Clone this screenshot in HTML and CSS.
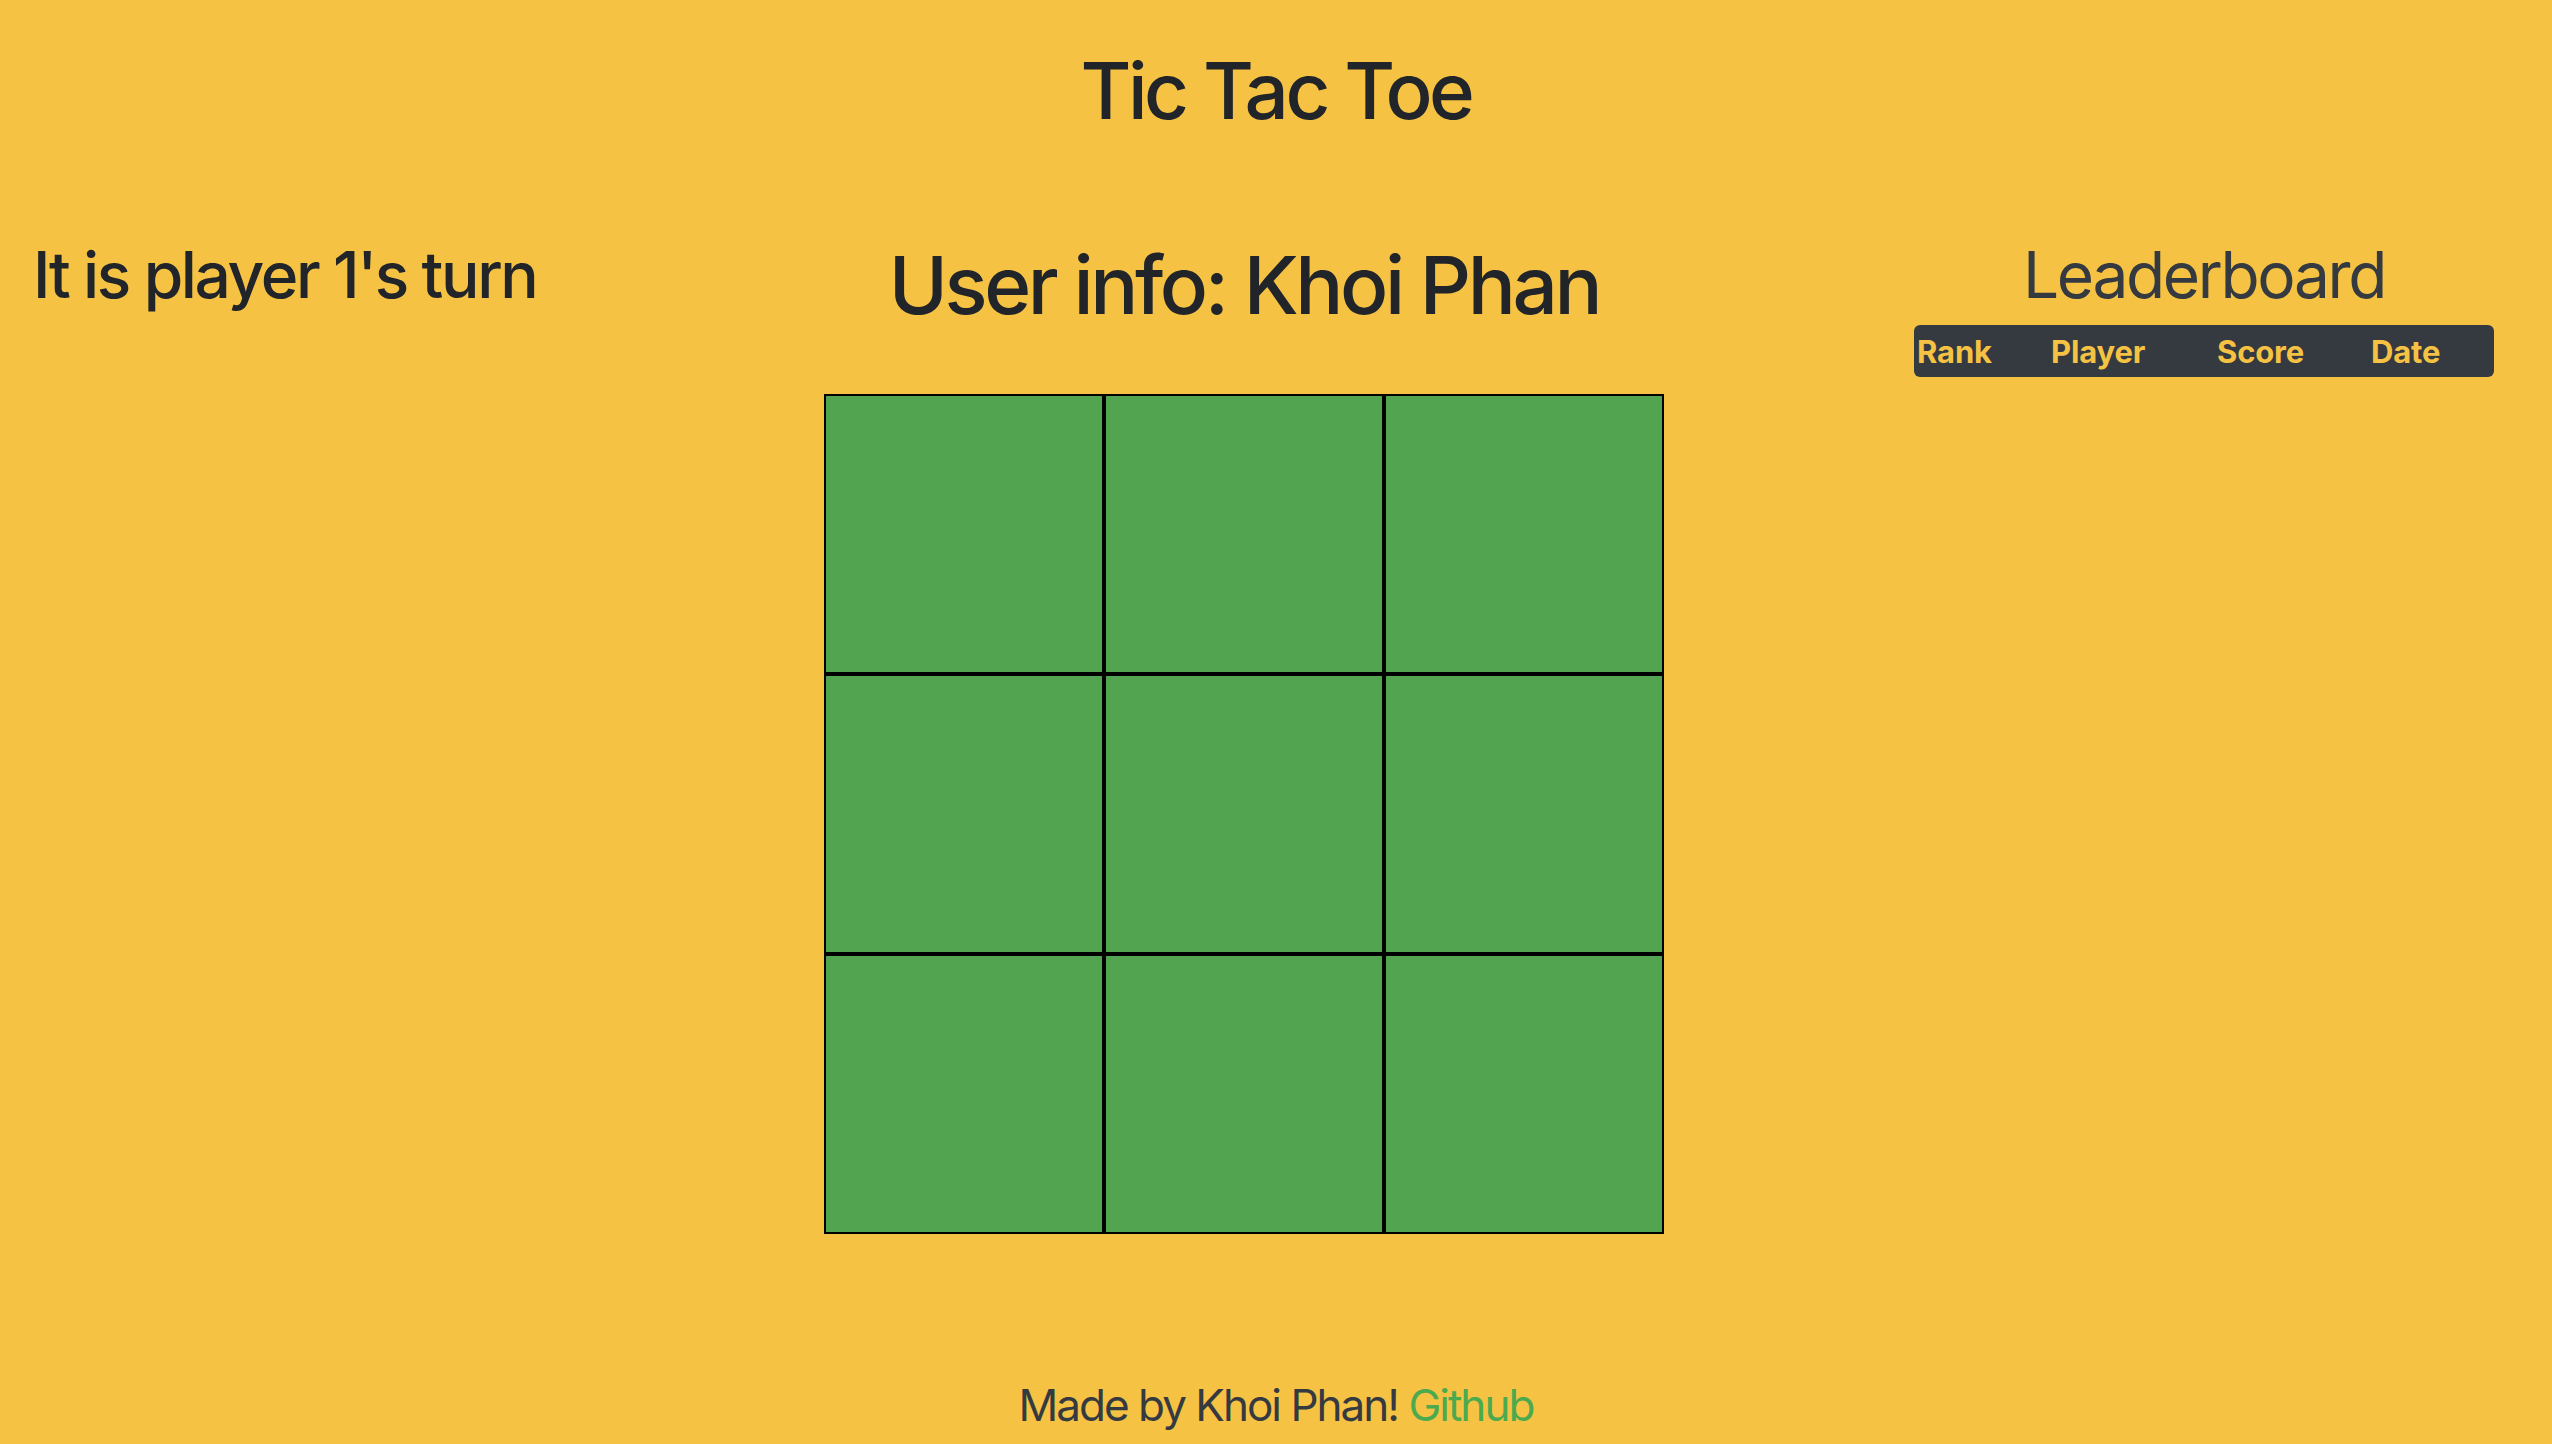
FILE: index.html
```html
<!DOCTYPE html>
<html lang="en">
<head>
<meta charset="utf-8">
<title>Tic Tac Toe</title>
<link rel="stylesheet" href="styles.css">
</head>
<body>
<div class="page">
  <h1 class="title">Tic Tac Toe</h1>
  <main class="layout">
    <section class="turn-col">
      <h3 class="turn">It is player 1's turn</h3>
    </section>
    <section class="game-col">
      <h2 class="user-info">User info: Khoi Phan</h2>
      <div class="board">
        <div class="cell"></div><div class="cell"></div><div class="cell"></div>
        <div class="cell"></div><div class="cell"></div><div class="cell"></div>
        <div class="cell"></div><div class="cell"></div><div class="cell"></div>
      </div>
    </section>
    <section class="leader-col">
      <h3 class="leader-title">Leaderboard</h3>
      <table class="leader-table">
        <colgroup>
          <col class="c-rank"><col class="c-player"><col class="c-score"><col class="c-date">
        </colgroup>
        <thead>
          <tr><th>Rank</th><th>Player</th><th>Score</th><th>Date</th></tr>
        </thead>
      </table>
    </section>
  </main>
  <footer class="footer">Made by Khoi Phan! <a class="gh" href="#">Github</a></footer>
</div>
</body>
</html>
```

FILE: styles.css
```css
html, body {
  margin: 0;
  padding: 0;
}
body {
  background: #f6c244;
  font-family: Inter, "Noto Sans", "Liberation Sans", sans-serif;
  color: #212529;
}
.page {
  height: 1444px;
  display: flex;
  flex-direction: column;
}
.title {
  margin: 0;
  padding-top: 41px;
  text-align: center;
  font-size: 78px;
  font-weight: 500;
  letter-spacing: -0.045em;
  line-height: 100px;
}
.layout {
  display: grid;
  grid-template-columns: minmax(0, 1fr) 840px 580px;
  column-gap: 250px;
  padding: 0 58px 0 33px;
  margin-top: 94px;
}
.turn {
  margin: 0;
  font-size: 64px;
  font-weight: 500;
  letter-spacing: -0.037em;
  line-height: 80px;
  white-space: nowrap;
}
.game-col {
  display: flex;
  flex-direction: column;
  align-items: center;
}
.user-info {
  margin: 0;
  font-size: 80px;
  font-weight: 500;
  letter-spacing: -0.042em;
  line-height: 100px;
  white-space: nowrap;
}
.board {
  margin-top: 59px;
  display: grid;
  grid-template-columns: repeat(3, 280px);
  grid-template-rows: repeat(3, 280px);
}
.cell {
  background: #52a450;
  border: 2px solid #000;
}
.leader-col {
  display: flex;
  flex-direction: column;
  align-items: center;
}
.leader-title {
  margin: 0;
  font-size: 64px;
  font-weight: 400;
  letter-spacing: -0.037em;
  color: #343a40;
  line-height: 80px;
}
.leader-table {
  margin-top: 10px;
  width: 580px;
  table-layout: fixed;
  border-collapse: separate;
  border-spacing: 0;
  background: #343a40;
  border-radius: 6px;
}
.c-rank { width: 134px; }
.c-player { width: 166px; }
.c-score { width: 154px; }
.c-date { width: 126px; }
.leader-table th {
  color: #f6c244;
  font-size: 31px;
  font-weight: 700;
  letter-spacing: -0.005em;
  text-align: left;
  height: 52px;
  padding: 0 0 0 3px;
  vertical-align: middle;
}
.footer {
  margin-top: auto;
  text-align: center;
  font-size: 44px;
  letter-spacing: -0.045em;
  line-height: 60px;
  color: #343a40;
  padding-bottom: 9px;
}
.gh {
  color: #4caa4e;
  text-decoration: none;
}
```
